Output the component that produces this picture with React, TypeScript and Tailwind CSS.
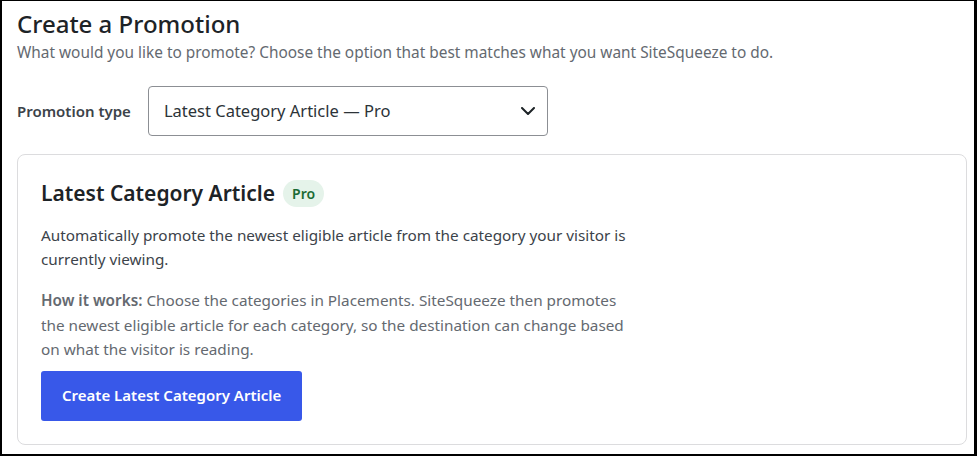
const font = { fontFamily: '"Noto Sans", "Liberation Sans", sans-serif' };

function Chevron() {
  return (
    <svg width="14" height="8" viewBox="0 0 14 8" fill="none" className="text-[#1d2327]">
      <path d="M1 1l6 6 6-6" stroke="currentColor" strokeWidth="2" strokeLinecap="round" strokeLinejoin="round" />
    </svg>
  );
}

function PromotionCard() {
  return (
    <section className="mt-[18px] rounded-lg border border-[#dcdcde] bg-white px-[23px] pt-[23px] pb-[23px]">
      <div className="flex items-center gap-[8px]">
        <h2 className="text-[21px] font-semibold leading-[30px] text-[#1d2327]">Latest Category Article</h2>
        <span className="rounded-full bg-[#e5f3ea] px-[9px] py-[4px] text-[14px] font-semibold leading-[19px] text-[#1a6b35]">
          Pro
        </span>
      </div>
      <p className="mt-[15px] max-w-[592px] text-[15.3px] leading-6 text-[#3c434a]">
        Automatically promote the newest eligible article from the category your visitor is currently viewing.
      </p>
      <p className="mt-[17px] max-w-[592px] text-[15.3px] leading-[24.5px] text-[#646970]">
        <strong className="font-semibold">How it works:</strong> Choose the categories in Placements. SiteSqueeze then
        promotes the newest eligible article for each category, so the destination can change based on what the visitor is
        reading.
      </p>
      <button className="mt-[9px] h-[50px] rounded-[3px] bg-[#3858e9] px-[21px] text-[15px] font-semibold text-white">
        Create Latest Category Article
      </button>
    </section>
  );
}

export default function App() {
  return (
    <div style={font} className="h-[456px] border-t border-l-2 border-r-[3px] border-b-2 border-black bg-white">
      <div className="pl-[15px] pr-[7px] pt-[8px]">
        <h1 className="text-[24px] font-medium leading-[30px] text-[#1d2327]">Create a Promotion</h1>
        <p className="mt-[4px] text-[15.4px] leading-5 text-[#646970]">
          What would you like to promote? Choose the option that best matches what you want SiteSqueeze to do.
        </p>
        <div className="mt-[23px] flex items-center gap-[17px]">
          <label className="text-[15px] font-semibold text-[#3c434a]">Promotion type</label>
          <div className="flex h-[50px] w-[400px] items-center justify-between rounded-[4px] border border-[#8c8f94] bg-white pl-[15px] pr-[12px]">
            <span className="text-[16.5px] text-[#2c3338]">Latest Category Article — Pro</span>
            <Chevron />
          </div>
        </div>
        <PromotionCard />
      </div>
    </div>
  );
}
